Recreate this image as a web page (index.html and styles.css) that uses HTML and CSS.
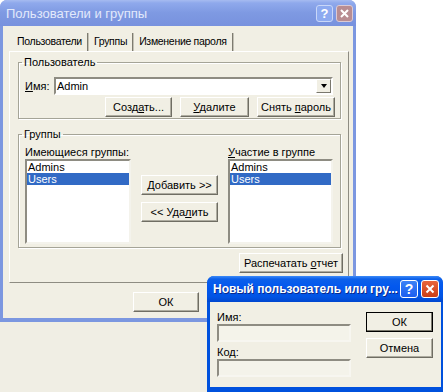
FILE: index.html
```html
<!DOCTYPE html>
<html lang="ru">
<head>
    <meta charset="UTF-8">
    <title>Пользователи и группы</title>
    <link rel="stylesheet" href="styles.css">
</head>
<body>

<div class="desktop">
    <div class="window inactive">
        <div class="titlebar">
            <span class="title">Пользователи и группы</span>
            <span class="tb-btn help">?</span>
            <span class="tb-btn close">
                <svg width="9" height="9" viewBox="0 0 9 9"><path d="M1 1L8 8M8 1L1 8" stroke="#fff" stroke-width="2"/></svg>
            </span>
        </div>
        <div class="client">
            <div class="tabs">
                <span class="tab active">Пользователи</span>
                <span class="tab">Группы</span>
                <span class="tab">Изменение пароля</span>
            </div>
            <div class="tab-panel">
                <fieldset class="group user-group">
                    <legend>Пользователь</legend>
                    <div class="name-row">
                        <label class="name-label"><u>И</u>мя:</label>
                        <div class="combo">
                            <span class="combo-text">Admin</span>
                            <span class="combo-arrow"><span class="tri"></span></span>
                        </div>
                    </div>
                    <div class="btn-row">
                        <button class="btn w-create">Созд<u>а</u>ть...</button>
                        <button class="btn w-delete"><u>У</u>далите</button>
                        <button class="btn w-pass">Снять <u>п</u>ароль</button>
                    </div>
                </fieldset>

                <fieldset class="group groups-group">
                    <legend>Группы</legend>
                    <div class="groups-grid">
                        <div class="list-col">
                            <label class="list-label">Имеющиеся группы:</label>
                            <ul class="list">
                                <li>Admins</li>
                                <li class="selected">Users</li>
                            </ul>
                        </div>
                        <div class="mid-col">
                            <button class="btn w-move"><u>Д</u>обавить &gt;&gt;</button>
                            <button class="btn w-move">&lt;&lt; Уда<u>л</u>ить</button>
                        </div>
                        <div class="list-col">
                            <label class="list-label"><u>У</u>частие в группе</label>
                            <ul class="list">
                                <li>Admins</li>
                                <li class="selected">Users</li>
                            </ul>
                        </div>
                    </div>
                </fieldset>

                <div class="print-row">
                    <button class="btn w-print">Распечатать <u>о</u>тчет</button>
                </div>
            </div>
            <div class="footer">
                <button class="btn w-foot">ОК</button>
                <button class="btn w-foot">Отмена</button>
                <button class="btn w-foot">Применить</button>
            </div>
        </div>
    </div>

    <div class="backdrop"></div>

    <div class="dialog">
        <div class="titlebar">
            <span class="title">Новый пользователь или гру...</span>
            <span class="tb-btn help">?</span>
            <span class="tb-btn close">
                <svg width="10" height="10" viewBox="0 0 10 10"><path d="M1.5 1.5L8.5 8.5M8.5 1.5L1.5 8.5" stroke="#fff" stroke-width="2"/></svg>
            </span>
        </div>
        <div class="dialog-client">
            <div class="field-col">
                <label class="field-label">Имя:</label>
                <div class="field"></div>
                <label class="field-label second">Код:</label>
                <div class="field"></div>
            </div>
            <div class="dialog-buttons">
                <button class="btn w-dlg default">ОК</button>
                <button class="btn w-dlg">Отмена</button>
            </div>
        </div>
    </div>
</div>

</body>
</html>
```

FILE: styles.css
```css
body {
    margin: 0;
    background: #ffffff;
    font-family: "Liberation Sans", Arial, sans-serif;
    font-size: 11px;
    color: #000;
}

.desktop {
    position: relative;
    width: 443px;
    height: 392px;
    overflow: hidden;
}

/* main window (inactive) */

.window {
    width: 356px;
    height: 322px;
    box-sizing: border-box;
    padding: 0 3px 4px 3px;
    background: #7c97e0;
    border-radius: 7px 7px 0 0;
    display: flex;
    flex-direction: column;
}

.titlebar {
    height: 26px;
    display: flex;
    align-items: center;
    flex-shrink: 0;
}

.window .titlebar {
    padding-left: 3px;
    background: linear-gradient(to bottom, #a6bbf0 0, #8fa9ec 3px, #7e99e2 50%, #7892de 100%);
    margin: 0 -3px;
    padding-right: 3px;
    border-radius: 7px 7px 0 0;
}

.title {
    font-size: 13px;
    white-space: nowrap;
}

.window .title {
    color: #e2e9fb;
    padding-left: 3px;
}

.tb-btn {
    width: 15px;
    height: 15px;
    border-radius: 3px;
    display: flex;
    align-items: center;
    justify-content: center;
    color: #fff;
    font-weight: bold;
    font-size: 13px;
}

.window .help {
    margin-left: auto;
    background: #8daaf0;
    border: 1px solid #c9d7f8;
}

.window .close {
    margin-left: 3px;
    background: #b88d92;
    border: 1px solid #dccad3;
}

.client {
    flex: 1;
    background: #f1efe4;
    padding: 7px 4px 0 6px;
}

/* tabs */

.tabs {
    display: flex;
    height: 18px;
    padding-left: 3px;
}

.tab {
    padding: 0 5px;
    line-height: 17px;
    font-size: 10.5px;
    letter-spacing: -0.3px;
    border-right: 1px solid #7d7b70;
    box-shadow: 1px 0 0 #c3c1b5;
    margin-right: 1px;
}

.tab-panel {
    height: 232px;
    box-sizing: border-box;
    border: 1px solid;
    border-color: #fff #8e8c82 #8e8c82 #fff;
    padding: 4px 7px 0 8px;
}

/* group boxes */

.group {
    margin: 0;
    padding: 0 0 0 6px;
    border: 1px solid #a5a497;
    box-shadow: 1px 1px 0 #fff, inset 1px 1px 0 #fff;
}

.group legend {
    padding: 0 2px;
    margin-left: -3px;
    line-height: 13px;
}

.user-group {
    padding-top: 8px;
    padding-bottom: 1px;
}

.name-row {
    display: flex;
    align-items: center;
}

.name-label {
    width: 29px;
}

.combo {
    width: 279px;
    height: 18px;
    box-sizing: border-box;
    border: 2px solid;
    border-color: #8e8c82 #fff #fff #8e8c82;
    background: #fff;
    display: flex;
    align-items: center;
}

.combo-text {
    flex: 1;
    padding-left: 1px;
}

.combo-arrow {
    width: 15px;
    height: 14px;
    box-sizing: border-box;
    background: #f1efe4;
    border: 1px solid;
    border-color: #fff #7a786d #7a786d #fff;
    display: flex;
    align-items: center;
    justify-content: center;
}

.tri {
    width: 0;
    height: 0;
    border-left: 3px solid transparent;
    border-right: 3px solid transparent;
    border-top: 4px solid #000;
}

.btn-row {
    display: flex;
    justify-content: flex-end;
    gap: 8px;
    margin-top: 2px;
    margin-right: 5px;
}

.btn {
    height: 20px;
    box-sizing: border-box;
    padding: 0;
    background: #f1efe4;
    border: 1px solid;
    border-color: #fff #6f6d63 #6f6d63 #fff;
    box-shadow: inset -1px -1px 0 #aeaca0;
    font-family: "Liberation Sans", Arial, sans-serif;
    font-size: 11px;
    color: #000;
    text-align: center;
}

.w-create { width: 67px; }
.w-delete { width: 69px; }
.w-pass { width: 78px; }
.w-move { width: 77px; }
.w-print { width: 104px; }
.w-foot { width: 66px; }
.w-dlg { width: 67px; }

.groups-group {
    margin-top: 9px;
    padding-top: 5px;
    padding-bottom: 3px;
}

.groups-grid {
    display: grid;
    grid-template-columns: 106px 77px 105px;
    column-gap: 10px;
}

.list-label {
    display: block;
    line-height: 13px;
    white-space: nowrap;
}

.list {
    list-style: none;
    margin: 0;
    padding: 0;
    height: 85px;
    box-sizing: border-box;
    background: #fff;
    border: 2px solid;
    border-color: #8e8c82 #f4f3ec #f4f3ec #8e8c82;
}

.list li {
    height: 12px;
    line-height: 12px;
    padding-left: 1px;
}

.list li.selected {
    background: #316ac5;
    color: #fff;
}

.mid-col {
    display: flex;
    flex-direction: column;
    gap: 7px;
    padding-top: 29px;
}

.print-row {
    display: flex;
    justify-content: flex-end;
    margin-top: 5px;
    margin-right: -2px;
}

.footer {
    display: flex;
    justify-content: flex-end;
    gap: 8px;
    margin-top: 9px;
    padding-right: 2px;
}

.backdrop {
    height: 70px;
    background: #f0eee4;
}

/* second dialog (active) */

.dialog {
    position: absolute;
    left: 207px;
    top: 276px;
    width: 236px;
    height: 116px;
    box-sizing: border-box;
    padding: 0 2px 5px 3px;
    background: #0051dd;
    border-radius: 7px 7px 0 0;
    display: flex;
    flex-direction: column;
}

.dialog .titlebar {
    margin: 0 -2px 0 -3px;
    padding: 0 4px 0 6px;
    border-radius: 7px 7px 0 0;
    background: linear-gradient(to bottom, #3d8bf8 0, #0c60ea 3px, #0358ee 40%, #0154e4 80%, #0047cf 100%);
}

.dialog .title {
    color: #fff;
    font-weight: bold;
    font-size: 12px;
    text-shadow: 1px 1px 0 #0a2a8c;
}

.dialog .tb-btn {
    width: 16px;
    height: 16px;
    border: 1px solid #fff;
}

.dialog .help {
    margin-left: auto;
    background: linear-gradient(#3c82f6, #1b5ef0);
    font-size: 14px;
}

.dialog .close {
    margin-left: 3px;
    background: linear-gradient(#e8653d, #c93d17);
}

.dialog-client {
    flex: 1;
    background: #f1efe4;
    display: flex;
    padding: 9px 0 0 7px;
}

.field-col {
    width: 134px;
    display: flex;
    flex-direction: column;
}

.field-label {
    line-height: 13px;
}

.field-label.second {
    margin-top: 4px;
}

.field {
    height: 18px;
    box-sizing: border-box;
    border: 2px solid;
    border-color: #8e8c82 #f7f6f0 #f7f6f0 #8e8c82;
    background: #f4f3ea;
}

.dialog-buttons {
    margin-left: 15px;
    padding-top: 1px;
    display: flex;
    flex-direction: column;
    gap: 6px;
}

.btn.default {
    border-color: #000;
    box-shadow: inset -1px -1px 0 #7a786d;
}
```
